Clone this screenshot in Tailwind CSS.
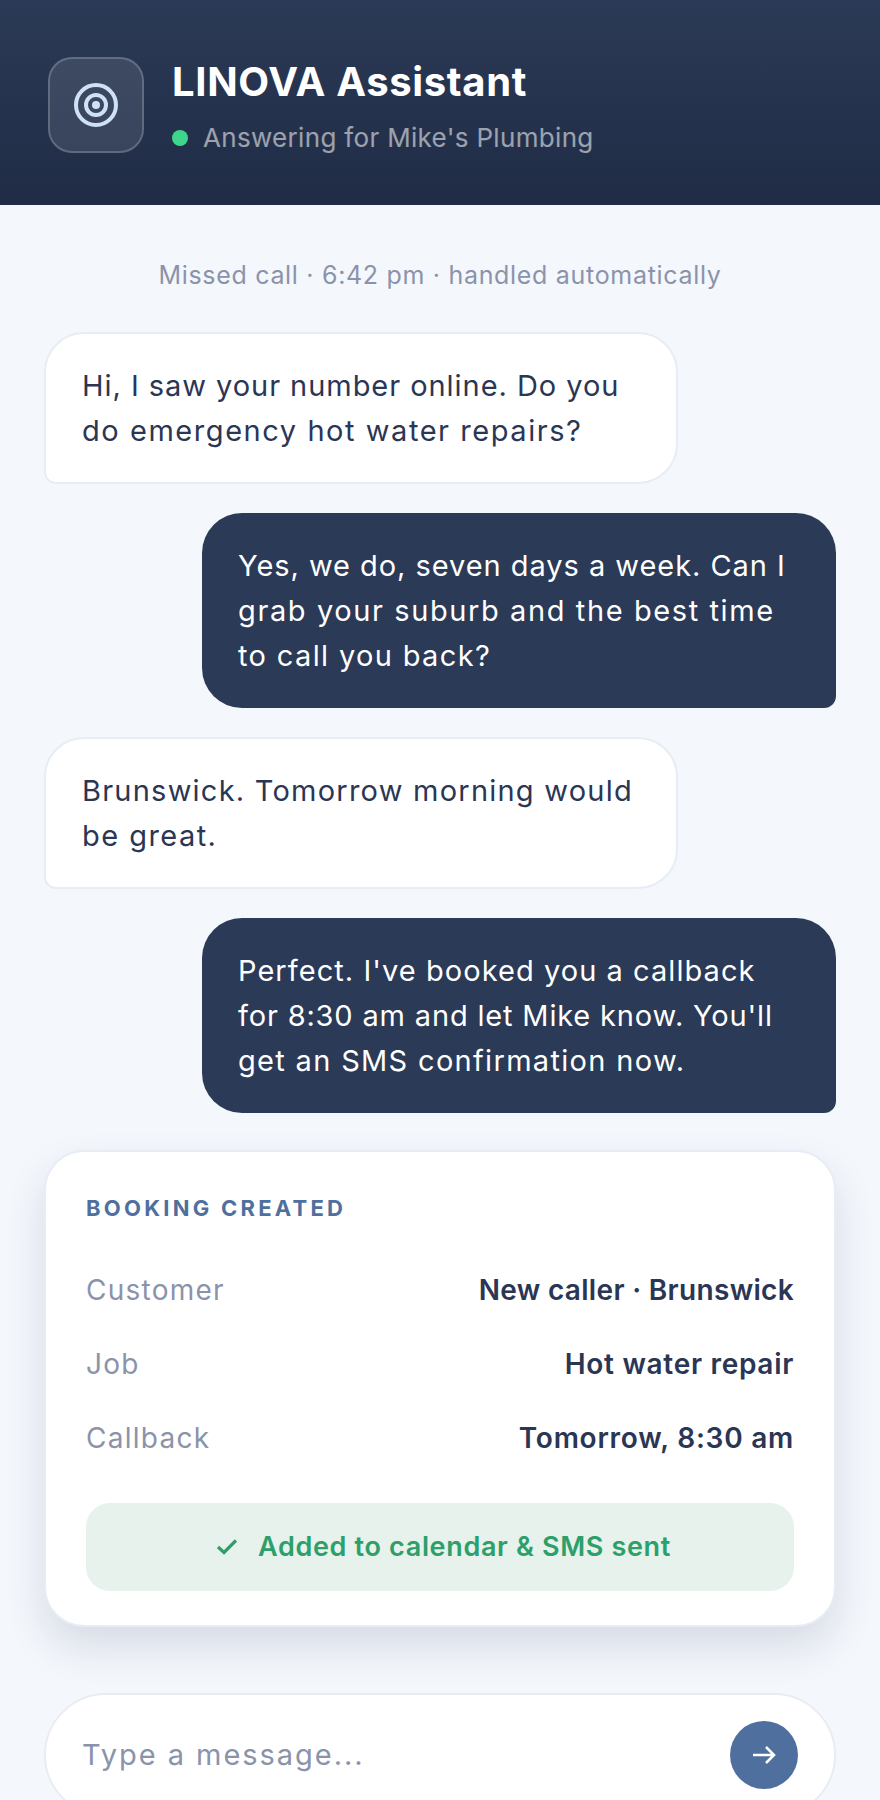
<!DOCTYPE html>
<html lang="en">
<head>
  <meta charset="UTF-8" />
  <meta name="viewport" content="width=device-width, initial-scale=1.0" />
  <title>LINOVA Assistant</title>
  <script src="https://cdn.jsdelivr.net/npm/@tailwindcss/browser@4"></script>
</head>
<body class="bg-[#f4f7fc] font-['Inter',sans-serif] antialiased">
  <div class="w-[880px] h-[1800px] overflow-hidden flex flex-col">
    <!-- header -->
    <header class="h-[205px] shrink-0 flex items-start gap-[28px] pl-[48px] pt-[57px] bg-gradient-to-b from-[#2b3a56] to-[#202c46]">
      <div class="w-[96px] h-[96px] rounded-[24px] border-2 border-white/20 bg-white/10 flex items-center justify-center">
        <svg width="48" height="48" viewBox="0 0 24 24" fill="none" stroke="#cfe2f5" stroke-width="2">
          <circle cx="12" cy="12" r="10" />
          <circle cx="12" cy="12" r="5" />
          <circle cx="12" cy="12" r="2" fill="#cfe2f5" stroke="none" />
        </svg>
      </div>
      <div class="-mt-[5px]">
        <h1 class="text-[40px] leading-[60px] font-bold tracking-[0.65px] text-white whitespace-nowrap">LINOVA Assistant</h1>
        <div class="flex items-center gap-[15px] mt-[6px]">
          <span class="w-[16px] h-[16px] rounded-full bg-[#3dd68c]"></span>
          <span class="text-[26px] leading-[40px] tracking-[0.32px] text-white/55 whitespace-nowrap">Answering for Mike's Plumbing</span>
        </div>
      </div>
    </header>

    <!-- conversation -->
    <main class="px-[44px] flex flex-col">
      <p class="mt-[52px] text-center text-[25px] leading-[36px] tracking-[0.69px] text-[#8b93ab] whitespace-nowrap">Missed call · 6:42 pm · handled automatically</p>

      <div class="mt-[39px] w-[634px] rounded-[40px] rounded-bl-[12px] border-2 border-[#e8edf5] bg-white px-[36px] py-[29px] text-[29px] leading-[45px] tracking-[0.95px] text-[#2b3654] whitespace-nowrap">
        Hi, I saw your number online. Do you<br />
        <span class="tracking-[1.55px]">do emergency hot water repairs?</span>
      </div>

      <div class="mt-[29px] self-end w-[634px] rounded-[40px] rounded-br-[12px] bg-[#2b3a56] px-[36px] py-[30px] text-[29px] leading-[45px] tracking-[0.95px] text-white whitespace-nowrap">
        Yes, we do, seven days a week. Can I<br />
        <span class="tracking-[1.6px]">grab your suburb and the best time</span><br />
        <span class="tracking-[1.35px]">to call you back?</span>
      </div>

      <div class="mt-[29px] w-[634px] rounded-[40px] rounded-bl-[12px] border-2 border-[#e8edf5] bg-white px-[36px] py-[29px] text-[29px] leading-[45px] tracking-[1.23px] text-[#2b3654] whitespace-nowrap">
        Brunswick. Tomorrow morning would<br />
        <span class="tracking-[1.45px]">be great.</span>
      </div>

      <div class="mt-[29px] self-end w-[634px] rounded-[40px] rounded-br-[12px] bg-[#2b3a56] px-[36px] py-[30px] text-[29px] leading-[45px] tracking-[1.05px] text-white whitespace-nowrap">
        Perfect. I've booked you a callback<br />
        <span class="tracking-[0.83px]">for 8:30 am and let Mike know. You'll</span><br />
        <span class="tracking-[1.32px]">get an SMS confirmation now.</span>
      </div>

      <!-- booking card -->
      <section class="mt-[37px] h-[477px] rounded-[40px] border-2 border-[#e8edf5] bg-white px-[40px] pt-[40px] shadow-[0_20px_40px_rgba(43,58,86,0.14)]">
        <h2 class="text-[22px] leading-[33px] font-bold tracking-[3.25px] text-[#4f6f9e]">BOOKING CREATED</h2>
        <dl class="mt-[43px] flex flex-col gap-[30px] text-[28px] leading-[44px]">
          <div class="flex justify-between">
            <dt class="tracking-[1.25px] text-[#8b93ab]">Customer</dt>
            <dd class="tracking-[0.32px] font-semibold text-[#2b3654]">New caller · Brunswick</dd>
          </div>
          <div class="flex justify-between">
            <dt class="tracking-[1.25px] text-[#8b93ab]">Job</dt>
            <dd class="tracking-[0.7px] font-semibold text-[#2b3654]">Hot water repair</dd>
          </div>
          <div class="flex justify-between">
            <dt class="tracking-[1.25px] text-[#8b93ab]">Callback</dt>
            <dd class="tracking-[0.75px] font-semibold text-[#2b3654]">Tomorrow, 8:30 am</dd>
          </div>
        </dl>
        <div class="mt-[43px] h-[88px] rounded-[24px] bg-[#e6f2eb] flex items-center justify-center gap-[21px] pl-[8px]">
          <svg width="20" height="16" viewBox="0 0 20 16" fill="none" stroke="#2d9f6a" stroke-width="3.2">
            <path d="M1 8l6 5.5L19 1.5" />
          </svg>
          <span class="text-[27px] tracking-[0.66px] font-semibold text-[#2d9f6a]">Added to calendar &amp; SMS sent</span>
        </div>
      </section>

      <!-- message input -->
      <div class="mt-[66px] h-[124px] shrink-0 rounded-[62px] border-2 border-[#e8edf5] bg-white flex items-center justify-between pl-[36px] pr-[36px]">
        <span class="text-[29px] tracking-[1.95px] text-[#8b93ab]">Type a message...</span>
        <button class="w-[68px] h-[68px] rounded-full bg-[#4f6f9e] flex items-center justify-center">
          <svg width="24" height="24" viewBox="0 0 24 24" fill="none" stroke="white" stroke-width="2.5">
            <path d="M1 12h21M14 4l8 8-8 8" />
          </svg>
        </button>
      </div>
    </main>
  </div>
</body>
</html>
